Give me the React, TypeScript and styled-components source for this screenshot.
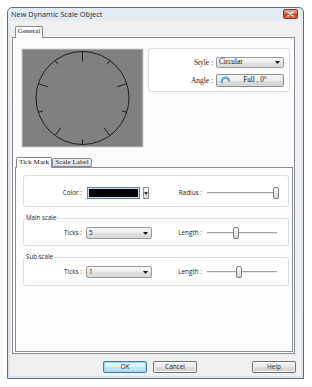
import React from "react";
import styled, { createGlobalStyle } from "styled-components";

const SANS = `"Open Sans", "Noto Sans", "DejaVu Sans", sans-serif`;
const SERIF = `"Liberation Serif", "DejaVu Serif", serif`;

const GlobalStyle = createGlobalStyle`
  html, body { margin: 0; padding: 0; background: #ffffff; }
  body { width: 312px; height: 387px; overflow: hidden; font-family: ${SANS}; }
  * { box-sizing: border-box; }
`;

const Page = styled.div`
  padding: 7px 0 0 7px;
`;

const Window = styled.div`
  width: 297px;
  height: 372px;
  border: 1px solid #5f6f80;
  border-radius: 5px 5px 0 0;
  background: linear-gradient(180deg, #e3eaf2 0%, #d8e3ee 100%);
  display: flex;
  flex-direction: column;
  padding: 0 2px 2px 2px;
`;

const TitleBar = styled.div`
  height: 13px;
  display: flex;
  align-items: flex-start;
  justify-content: space-between;
  padding: 0 3px 0 1px;
`;

const TitleText = styled.span`
  font-family: ${SANS};
  font-size: 7.4px;
  line-height: 13px;
  color: #1c2a3a;
`;

const CloseButton = styled.div`
  width: 15px;
  height: 10px;
  margin-top: 1px;
  border: 1px solid #8a3526;
  border-radius: 2px;
  background: linear-gradient(180deg, #e5a594 0%, #d46a52 45%, #c2412a 55%, #d0644c 100%);
  display: flex;
  align-items: center;
  justify-content: center;
`;

const Client = styled.div`
  flex: 1;
  background: #f0f0f0;
  display: flex;
  flex-direction: column;
  padding: 5px 6px 0 2px;
`;

const TabStrip = styled.div<{ $h: number; $pl: number }>`
  height: ${(p) => p.$h}px;
  display: flex;
  align-items: flex-end;
  padding-left: ${(p) => p.$pl}px;
  position: relative;
  z-index: 1;
`;

const Tab = styled.div<{ $active?: boolean; $w: number; $h: number }>`
  width: ${(p) => p.$w}px;
  height: ${(p) => p.$h}px;
  margin-bottom: ${(p) => (p.$active ? -1 : 0)}px;
  border: 1px solid #898c95;
  border-bottom: ${(p) => (p.$active ? "none" : "1px solid #898c95")};
  border-radius: 2px 2px 0 0;
  background: ${(p) => (p.$active ? "#fcfcfc" : "linear-gradient(180deg, #f2f2f2 0%, #dcdcdc 100%)")};
  font-family: ${SERIF};
  font-size: 7.1px;
  line-height: 1;
  color: #1a1a1a;
  display: flex;
  align-items: center;
  justify-content: center;
  padding-bottom: ${(p) => (p.$active ? 1 : 0)}px;
`;

const GeneralPanel = styled.div`
  height: 317px;
  border: 1px solid #898c95;
  background: #fcfcfc;
  display: flex;
  flex-direction: column;
  padding: 0 1px 1px 2px;
`;

const TopRow = styled.div`
  display: flex;
  align-items: flex-start;
  gap: 5px;
  padding: 10px 0 0 7px;
`;

const Preview = styled.div`
  width: 121px;
  height: 98px;
  margin-top: 1px;
  background: #808080;
  border: 1px solid #a6a6a6;
  box-shadow: 0 0 0 1px #e6e6e6;
  display: flex;
`;

const StylePanel = styled.div`
  width: 142px;
  height: 44px;
  border: 1px solid #dcdcdc;
  border-radius: 3px;
  background: #ffffff;
  display: grid;
  grid-template-columns: 64px 68px;
  grid-template-rows: 11px 13px;
  column-gap: 3px;
  row-gap: 6px;
  padding: 8px 0 0 0;
`;

const SerifLabel = styled.span`
  font-family: ${SERIF};
  font-size: 7.4px;
  line-height: 1;
  color: #1a1a1a;
  display: flex;
  align-items: center;
  justify-content: flex-end;
`;

const Combo = styled.div<{ $serif?: boolean }>`
  height: 100%;
  border: 1px solid #9a9a9a;
  border-radius: 2px;
  background: linear-gradient(180deg, #f8f8f8 0%, #ececec 50%, #e0e0e0 51%, #d9d9d9 100%);
  display: flex;
  align-items: center;
  justify-content: space-between;
  padding: 0 3px 0 2px;
  font-family: ${(p) => (p.$serif ? SERIF : SANS)};
  font-size: ${(p) => (p.$serif ? 7.2 : 6.4)}px;
  line-height: 1;
  color: #111;
`;

const AngleButton = styled.div`
  height: 100%;
  border: 1px solid #8e8f8f;
  border-radius: 2px;
  background: linear-gradient(180deg, #f7f7f7 0%, #ececec 50%, #dedede 51%, #d4d4d4 100%);
  display: flex;
  align-items: center;
  padding-left: 3px;
`;

const AngleText = styled.span`
  flex: 1;
  text-align: center;
  font-family: ${SERIF};
  font-size: 7.2px;
  line-height: 1;
  color: #111;
  padding-right: 4px;
`;

const TickTabsWrap = styled.div`
  margin-top: 10px;
`;

const TickPanel = styled.div`
  flex: 1;
  border: 1px solid #898c95;
  background: #fdfdfd;
  display: flex;
  flex-direction: column;
  gap: 7px;
  padding: 7px 3px 0 7px;
`;

const Group = styled.fieldset<{ $pt: number; $pb: number }>`
  margin: 0;
  min-width: 0;
  border: 1px solid #d9dee3;
  border-radius: 3px;
  background: #ffffff;
  padding: ${(p) => p.$pt}px 0 ${(p) => p.$pb}px 0;
`;

const Legend = styled.legend`
  font-family: ${SANS};
  font-size: 6.2px;
  line-height: 8px;
  color: #222;
  padding: 0 1px;
  margin-left: 1px;
`;

const Row = styled.div`
  display: grid;
  grid-template-columns: 62px 66px 54px 74px;
  height: 12px;
  align-items: stretch;
`;

const SansLabel = styled.span`
  font-family: ${SANS};
  font-size: 6.4px;
  line-height: 1;
  color: #222;
  display: flex;
  align-items: center;
  justify-content: flex-end;
  padding-right: 4px;
`;

const ColorControl = styled.div`
  display: flex;
  align-items: stretch;
  gap: 3px;
  padding-left: 1px;
`;

const Swatch = styled.div<{ $color: string }>`
  width: 53px;
  border: 1px solid #5d83aa;
  box-shadow: inset 0 0 0 1px #c9dbee;
  background: ${(p) => p.$color};
`;

const ArrowButton = styled.div`
  width: 6px;
  border: 1px solid #8d8d8d;
  background: linear-gradient(180deg, #f5f5f5, #d8d8d8);
  display: flex;
  align-items: center;
  justify-content: center;
`;

const Slider = styled.div`
  position: relative;
  &::before {
    content: "";
    position: absolute;
    left: 1px;
    right: 3px;
    top: 5px;
    height: 1px;
    background: #a3a3a3;
    box-shadow: 0 1px 0 #ececec;
  }
`;

const Thumb = styled.div`
  position: absolute;
  top: 0;
  width: 6px;
  height: 12px;
  border: 1px solid #7d7d7d;
  border-radius: 2px;
  background: linear-gradient(180deg, #fdfdfd 0%, #e8e8e8 50%, #d6d6d6 100%);
`;

const ButtonRow = styled.div`
  display: flex;
  gap: 6px;
  padding: 7px 0 0 91px;
  margin-right: -1px;
`;

const Button = styled.div<{ $primary?: boolean; $push?: boolean }>`
  width: 44px;
  height: 12px;
  margin-left: ${(p) => (p.$push ? "auto" : "0")};
  border: 1px solid ${(p) => (p.$primary ? "#3c7fb1" : "#707070")};
  border-radius: 2px;
  background: ${(p) =>
    p.$primary
      ? "linear-gradient(180deg, #ecf7fd 0%, #dcf1fc 50%, #c3e6f8 51%, #b2dcf2 100%)"
      : "linear-gradient(180deg, #f3f3f3 0%, #ebebeb 50%, #dddddd 51%, #d0d0d0 100%)"};
  box-shadow: ${(p) => (p.$primary ? "inset 0 0 0 1px #9fd5f1" : "inset 0 0 0 1px #fafafa")};
  font-family: ${SANS};
  font-size: 6.4px;
  line-height: 1;
  color: #1e1e1e;
  display: flex;
  align-items: center;
  justify-content: center;
`;

const DownArrow = () => (
  <svg width="5" height="3" viewBox="0 0 5 3">
    <path d="M0 0 H5 L2.5 3 Z" fill="#111" />
  </svg>
);

const Gauge = () => {
  const cx = 59.5;
  const cy = 48;
  const r = 46.5;
  const ticks = Array.from({ length: 10 }, (_, i) => {
    const a = (i * 36 * Math.PI) / 180;
    const len = i % 2 === 0 ? 10 : 5;
    const r2 = r - len;
    return {
      x1: cx + r * Math.sin(a),
      y1: cy - r * Math.cos(a),
      x2: cx + r2 * Math.sin(a),
      y2: cy - r2 * Math.cos(a),
    };
  });
  return (
    <svg width="119" height="96" viewBox="0 0 119 96">
      <circle cx={cx} cy={cy} r={r} fill="none" stroke="#1e1e1e" strokeWidth="1" />
      {ticks.map((t, i) => (
        <line key={i} x1={t.x1} y1={t.y1} x2={t.x2} y2={t.y2} stroke="#1e1e1e" strokeWidth="1" />
      ))}
    </svg>
  );
};

const AngleIcon = () => (
  <svg width="11" height="9" viewBox="0 0 11 9">
    <path d="M2.2 6.8 A3.6 3.6 0 1 1 9 5.6" fill="none" stroke="#2f86d2" strokeWidth="2" />
    <path d="M2.2 6.8 A3.6 3.6 0 1 1 9 5.6" fill="none" stroke="#9fd0f5" strokeWidth="0.7" />
  </svg>
);

const CloseGlyph = () => (
  <svg width="7" height="6" viewBox="0 0 7 6">
    <path d="M1 1 L6 5 M6 1 L1 5" stroke="#ffffff" strokeWidth="1.6" strokeLinecap="round" />
  </svg>
);

const SliderControl = ({ pct }: { pct: number }) => (
  <Slider>
    <Thumb style={{ left: `${(pct / 100) * 68}px` }} />
  </Slider>
);

export default function App() {
  return (
    <>
      <GlobalStyle />
      <Page>
        <Window>
          <TitleBar>
            <TitleText>New Dynamic Scale Object</TitleText>
            <CloseButton>
              <CloseGlyph />
            </CloseButton>
          </TitleBar>
          <Client>
            <TabStrip $h={11} $pl={3}>
              <Tab $active $w={28} $h={12}>
                General
              </Tab>
            </TabStrip>
            <GeneralPanel>
              <TopRow>
                <Preview>
                  <Gauge />
                </Preview>
                <StylePanel>
                  <SerifLabel>Style :</SerifLabel>
                  <Combo $serif>
                    <span>Circular</span>
                    <DownArrow />
                  </Combo>
                  <SerifLabel>Angle :</SerifLabel>
                  <AngleButton>
                    <AngleIcon />
                    <AngleText>Full , 0°</AngleText>
                  </AngleButton>
                </StylePanel>
              </TopRow>
              <TickTabsWrap>
                <TabStrip $h={10} $pl={1}>
                  <Tab $active $w={36} $h={11}>
                    Tick Mark
                  </Tab>
                  <Tab $w={40} $h={9}>
                    Scale Label
                  </Tab>
                </TabStrip>
              </TickTabsWrap>
              <TickPanel>
                <Group $pt={11} $pb={7}>
                  <Row>
                    <SansLabel>Color :</SansLabel>
                    <ColorControl>
                      <Swatch $color="#000000" />
                      <ArrowButton>
                        <DownArrow />
                      </ArrowButton>
                    </ColorControl>
                    <SansLabel>Radius :</SansLabel>
                    <SliderControl pct={98.5} />
                  </Row>
                </Group>
                <Group $pt={5} $pb={6}>
                  <Legend>Main scale</Legend>
                  <Row>
                    <SansLabel>Ticks :</SansLabel>
                    <Combo>
                      <span>5</span>
                      <DownArrow />
                    </Combo>
                    <SansLabel>Length :</SansLabel>
                    <SliderControl pct={40} />
                  </Row>
                </Group>
                <Group $pt={5} $pb={7}>
                  <Legend>Sub scale</Legend>
                  <Row>
                    <SansLabel>Ticks :</SansLabel>
                    <Combo>
                      <span>1</span>
                      <DownArrow />
                    </Combo>
                    <SansLabel>Length :</SansLabel>
                    <SliderControl pct={44} />
                  </Row>
                </Group>
              </TickPanel>
            </GeneralPanel>
            <ButtonRow>
              <Button $primary>OK</Button>
              <Button>Cancel</Button>
              <Button $push>Help</Button>
            </ButtonRow>
          </Client>
        </Window>
      </Page>
    </>
  );
}
